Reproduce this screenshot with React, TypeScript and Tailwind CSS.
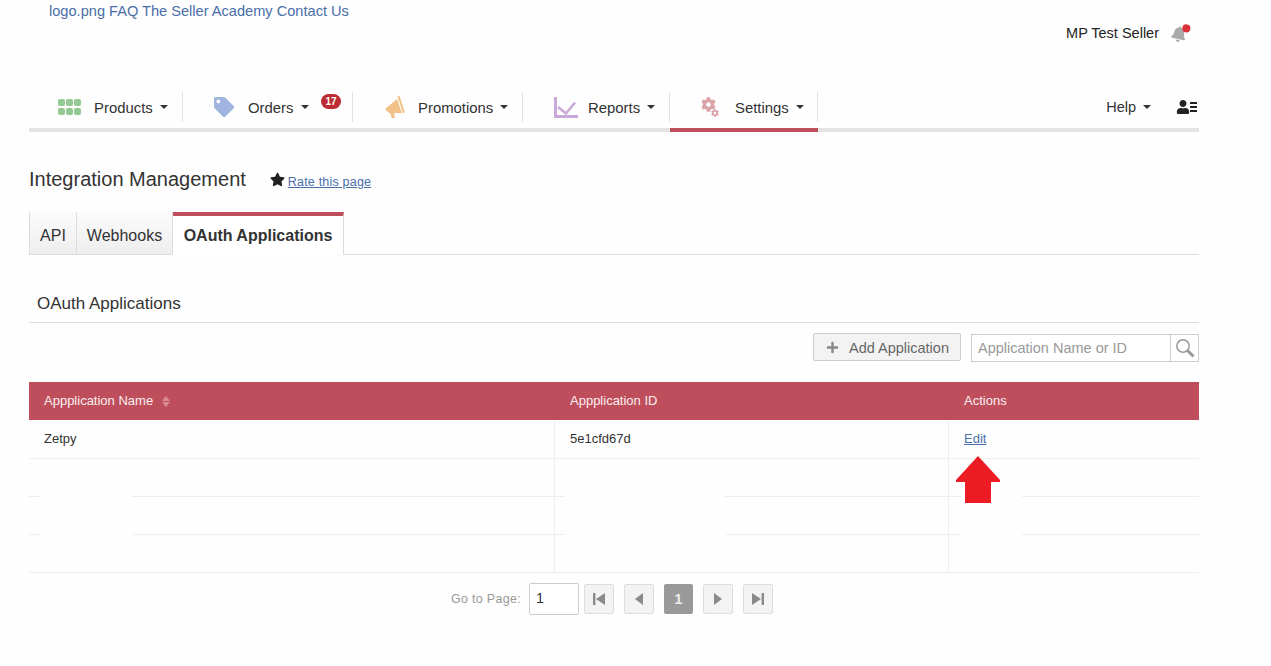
import * as React from "react";
import { FaBell, FaCog, FaPlus, FaStar, FaTag, FaUser } from "react-icons/fa";

const Caret = () => <span className="ml-[7px] inline-block h-0 w-0 border-x-[4px] border-t-[4px] border-x-transparent border-t-[#333]" />;

const GridIcon = () => (
  <div className="grid w-[23px] grid-cols-3 gap-x-[1px] gap-y-[2px]">
    {[0, 1, 2, 3, 4, 5].map((i) => (
      <span key={i} className="h-[7px] w-[7px] rounded-[2px] bg-[#93c993]" />
    ))}
  </div>
);

const HornIcon = () => (
  <svg width="22" height="24" viewBox="0 0 22 24" fill="#f2c28a">
    <path d="M1 14L13 4L18 18L5 18Z" />
    <path d="M13.5 1.5L15.5 0.8L21 17.5L19 18.2Z" />
    <path d="M6 18L10 18L11 22.5L8 23.5Z" />
  </svg>
);

const ChartIcon = () => (
  <svg width="24" height="21" viewBox="0 0 24 21" fill="none" stroke="#c9a9d8" strokeWidth="3">
    <path d="M1.5 0v19.5h22.5" />
    <path d="M4 10l8 6.5 9-11" strokeWidth="2.6" />
  </svg>
);

const GearsIcon = () => (
  <div className="relative h-[20px] w-[18px]">
    <FaCog className="absolute top-0 left-0 text-[15px] text-[#dba3a8]" />
    <FaCog className="absolute top-[12px] left-[10px] text-[8px] text-[#dba3a8]" />
  </div>
);

const SearchIcon = () => (
  <svg width="20" height="20" viewBox="0 0 20 20" fill="none" stroke="#999">
    <circle cx="8" cy="8" r="6.2" strokeWidth="1.5" />
    <path d="M12.5 12.5L18.5 18.5" strokeWidth="3" />
  </svg>
);

const NavItem = ({ icon, label, width, iconW, active, badge }: { icon: React.ReactNode; label: string; width: string; iconW: string; active?: boolean; badge?: string }) => (
  <div className={`relative -mb-[4px] h-[42px] border-b-4 pt-[2px] ${width} ${active ? "border-[#be4e5c]" : "border-transparent"}`}>
    <div className="flex h-[30px] w-full items-center border-r border-[#e2e2e2]">
      <div className={`flex shrink-0 items-center justify-center ${iconW}`}>{icon}</div>
      <span className="pt-[2px] text-[14.9px] text-[#333]">{label}</span>
      <Caret />
      {badge && (
        <span className="absolute top-[4px] right-[12px] flex h-[15px] w-[20px] items-center justify-center rounded-full bg-[#bd2c33] text-[10px] font-bold text-white">{badge}</span>
      )}
    </div>
  </div>
);

const Pager = ({ children }: { children: React.ReactNode }) => (
  <div className="flex h-[30px] w-[30px] items-center justify-center rounded-[2px] border border-[#ddd] bg-[#f3f3f3]">
    {children}
  </div>
);

const Patch = ({ className }: { className: string }) => <span className={`absolute h-[3px] bg-white ${className}`} />;

const rows = [
  ["Zetpy", "5e1cfd67d", "Edit"],
  ["", "", ""],
  ["", "", ""],
  ["", "", ""],
];

export default function App() {
  return (
    <div className="relative h-[666px] overflow-hidden bg-[#fefefe] pl-[29px] font-['Liberation_Sans',Arial,sans-serif] text-[#333]">
      <div className="w-[1170px]">
        <div className="relative h-[90px]">
          <div className="pt-[2px] pl-[20px] text-[14.6px] leading-[18px] text-[#4a6ea9]">logo.png FAQ The Seller Academy Contact Us</div>
          <div className="absolute top-[23px] right-[12px] flex items-center">
            <span className="text-[14.5px] text-[#222]">MP Test Seller</span>
            <div className="relative ml-[12px] rotate-12 text-[16px] text-[#a9a9a9]">
              <FaBell />
              <span className="absolute -top-[3px] right-[-2px] h-[8px] w-[8px] rounded-full bg-[#d9303a]" />
            </div>
          </div>
        </div>

        <div className="flex h-[42px] items-start border-b-4 border-[#e4e4e4]">
          <NavItem width="w-[154px]" iconW="w-[65px] pl-[15px]" icon={<GridIcon />} label="Products" />
          <NavItem width="w-[170px]" iconW="w-[65px] pl-[16px]" icon={<FaTag className="text-[20px] text-[#a0b4e0]" />} label="Orders" badge="17" />
          <NavItem width="w-[170px]" iconW="w-[65px] pl-[18px]" icon={<HornIcon />} label="Promotions" />
          <NavItem width="w-[147px]" iconW="w-[65px] pl-[20px]" icon={<ChartIcon />} label="Reports" />
          <NavItem active width="w-[148px]" iconW="w-[65px] pl-[14px]" icon={<GearsIcon />} label="Settings" />
          <div className="ml-auto flex h-[30px] translate-y-[2px] items-center pr-[2px]">
            <span className="pt-[2px] text-[14.5px] text-[#333]">Help</span>
            <Caret />
            <div className="ml-[25px] flex items-center text-[#222]">
              <FaUser className="text-[14px]" />
              <div className="flex flex-col gap-[2px]">
                <span className="h-[2px] w-[7px] bg-[#222]" />
                <span className="h-[2px] w-[7px] bg-[#222]" />
                <span className="h-[2px] w-[7px] bg-[#222]" />
              </div>
            </div>
          </div>
        </div>

        <div className="mt-[33px] flex h-[28px] items-center">
          <h1 className="text-[20px] font-normal text-[#333]">Integration Management</h1>
          <FaStar className="mr-[3px] ml-[24px] text-[15px] text-[#222]" />
          <a className="mt-[6px] text-[12.5px] tracking-[0.2px] text-[#4a6ea9] underline">Rate this page</a>
        </div>

        <div className="mt-[19px] flex h-[43px] border-b border-[#ddd] text-[16px]">
          <div className="flex h-[43px] w-[48px] items-center justify-center border-r border-b border-l border-[#ddd] bg-gradient-to-b from-[#fbfbfb] to-[#eeeeee] pt-[6px]">API</div>
          <div className="flex h-[43px] w-[96px] items-center justify-center border-r border-b border-[#ddd] bg-gradient-to-b from-[#fbfbfb] to-[#eeeeee] pt-[6px]">Webhooks</div>
          <div className="flex h-[43px] w-[171px] items-center justify-center border-t-4 border-r border-[#be4e5c] border-r-[#ddd] bg-white font-bold">OAuth Applications</div>
        </div>

        <div className="mt-[37px] flex h-[31px] items-start border-b border-[#ddd] pl-[8px] text-[17px] leading-[24px] text-[#333]">OAuth Applications</div>

        <div className="mt-[10px] flex h-[29px] justify-end">
          <button className="flex h-[28px] w-[148px] items-center rounded-[2px] border border-[#ccc] bg-[#f3f3f3] pt-[3px] pl-[12px] text-[14.5px] text-[#666]">
            <FaPlus className="mr-[10px] -translate-y-[1px] text-[13px] text-[#888]" />
            Add Application
          </button>
          <div className="mt-[1px] ml-[10px] flex h-[28px] w-[228px] border border-[#ccc] bg-white">
            <div className="flex flex-1 items-center pt-[2px] pl-[6px] text-[14.5px] text-[#999]">Application Name or ID</div>
            <div className="flex w-[28px] items-center justify-center border-l border-[#ccc]"><SearchIcon /></div>
          </div>
        </div>

        <div className="mt-[20px] mb-[1px] grid h-[38px] grid-cols-[525px_394px_251px] items-center bg-[#be4e5c] text-[13px] text-[#fbeef0]">
          <div className="flex items-center pl-[15px]">
            Appplication Name
            <span className="ml-[9px] flex flex-col gap-[1px]">
              <span className="h-0 w-0 border-x-[4px] border-b-[5px] border-x-transparent border-b-[#d98b95]" />
              <span className="h-0 w-0 border-x-[4px] border-t-[5px] border-x-transparent border-t-[#d98b95]" />
            </span>
          </div>
          <div className="pl-[16px]">Appplication ID</div>
          <div className="pl-[16px]">Actions</div>
        </div>

        {rows.map((r, i) => (
          <div key={i} className="relative grid h-[38px] grid-cols-[525px_394px_251px] border-b border-[#eee] text-[13px] text-[#333]">
            <div className="flex items-center pb-[2px] pl-[15px]">{r[0]}</div>
            <div className="flex items-center border-l border-[#eee] pb-[2px] pl-[15px]">{r[1]}</div>
            <div className="flex items-center border-l border-[#eee] pb-[2px] pl-[15px] text-[#4a6ea9] underline">{r[2]}</div>
            {(i === 1 || i === 2) && (
              <>
                <Patch className="bottom-[-2px] left-[11px] w-[92px]" />
                <Patch className="bottom-[-2px] left-[536px] w-[160px]" />
                <Patch className="bottom-[-2px] left-[932px] w-[61px]" />
              </>
            )}
          </div>
        ))}

        <div className="mt-[10px] flex items-center pl-[422px]">
          <span className="mr-[8px] text-[12.5px] tracking-[0.3px] text-[#999]">Go to Page:</span>
          <div className="flex h-[32px] w-[50px] items-center rounded-[2px] border border-[#ccc] bg-white pl-[6px] text-[14.5px]">1</div>
          <div className="ml-[5px] flex items-center gap-[10px]">
            <Pager>
              <svg width="14" height="14" viewBox="0 0 14 14" fill="#8a8a8a"><path d="M1 1h2.4v12H1zM13 1v12L4 7z" /></svg>
            </Pager>
            <Pager>
              <svg width="10" height="14" viewBox="0 0 10 14" fill="#8a8a8a"><path d="M9 1v12L1 7z" /></svg>
            </Pager>
            <div className="flex h-[30px] w-[29px] items-center justify-center rounded-[2px] bg-[#999] text-[14px] font-bold text-[#eee]">1</div>
            <Pager>
              <svg width="10" height="14" viewBox="0 0 10 14" fill="#8a8a8a"><path d="M1 1v12l8-6z" /></svg>
            </Pager>
            <Pager>
              <svg width="14" height="14" viewBox="0 0 14 14" fill="#8a8a8a"><path d="M1 1v12l9-6zM10.6 1H13v12h-2.4z" /></svg>
            </Pager>
          </div>
        </div>
      </div>

      <svg className="absolute top-[456px] left-[956px]" width="44" height="48" viewBox="0 0 44 48" fill="#ed1c24">
        <path d="M22 0L44 24L44 26H35V47H9V26H0V24Z" />
      </svg>
    </div>
  );
}
